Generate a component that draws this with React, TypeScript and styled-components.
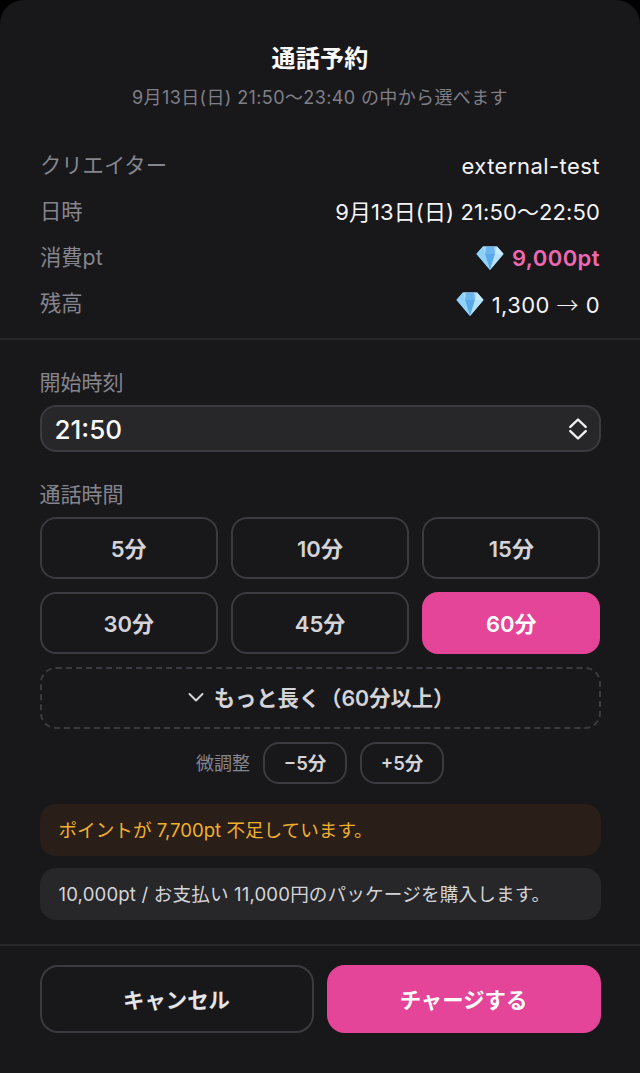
import React from "react";
import styled, { createGlobalStyle } from "styled-components";

const durations = [5, 10, 15, 30, 45, 60];

const Diamond: React.FC = () => (
	<GemSvg viewBox="0 0 28 26">
		<path d="M7 1.5h14L27.5 9 14 25 .5 9z" fill="#7cc4f4" />
		<path d="M7 1.5h14L27.5 9H.5z" fill="#a5dcfb" />
		<path d="M9 9h10l-5 16z" fill="#5aa9ea" />
		<path d="M10 2h8l1 7H9z" fill="#6db5ef" />
		<path d="M.5 9H9l5 16z" fill="#93d2f8" />
		<path d="M19 9h8.5L14 25z" fill="#b5e3fb" />
		<path d="M21 1.5 27.5 9H19z" fill="#c9ecfd" />
		<path d="M7 1.5.5 9H9z" fill="#8fd0f7" />
	</GemSvg>
);

const App: React.FC = () => (
	<>
		<GlobalStyle />
		<Sheet>
			<Header>
				<Title>通話予約</Title>
				<Subtitle>9月13日(日) 21:50〜23:40 の中から選べます</Subtitle>
			</Header>
			<Summary>
				<Row>
					<RowLabel>クリエイター</RowLabel>
					<RowValue>external-test</RowValue>
				</Row>
				<Row>
					<RowLabel>日時</RowLabel>
					<RowValue $tight>9月13日(日) 21:50〜22:50</RowValue>
				</Row>
				<Row>
					<RowLabel>消費pt</RowLabel>
					<RowValue $accent>
						<Diamond />
						9,000pt
					</RowValue>
				</Row>
				<Row>
					<RowLabel>残高</RowLabel>
					<RowValue>
						<Diamond />
						<span>
							1,300 <Arrow>→</Arrow> 0
						</span>
					</RowValue>
				</Row>
			</Summary>
			<Form>
				<FieldLabel>開始時刻</FieldLabel>
				<Select>
					<SelectValue>21:50</SelectValue>
					<svg width="18" height="24" viewBox="0 0 18 24" fill="none" stroke="#f0f0f2" strokeWidth="2.4" strokeLinecap="round" strokeLinejoin="round">
						<path d="M1.3 9.9 9 2.5l7.7 7.4" />
						<path d="M1.3 14.1 9 21.5l7.7-7.4" />
					</svg>
				</Select>
				<DurationLabel>通話時間</DurationLabel>
				<DurationGrid>
					{durations.map((d) => (
						<DurationButton key={d} $active={d === 60}>
							{d}分
						</DurationButton>
					))}
				</DurationGrid>
				<MoreButton>
					<svg width="20" height="20" viewBox="0 0 20 20" fill="none" stroke="#d4d4d8" strokeWidth="2" strokeLinecap="round" strokeLinejoin="round">
						<path d="m3.5 7 6.5 6.5L16.5 7" />
					</svg>
					もっと長く（60分以上）
				</MoreButton>
				<Adjust>
					<AdjustLabel>微調整</AdjustLabel>
					<AdjustButton>−5分</AdjustButton>
					<AdjustButton>+5分</AdjustButton>
				</Adjust>
				<Notice $warn>ポイントが 7,700pt 不足しています。</Notice>
				<Notice>10,000pt / お支払い 11,000円のパッケージを購入します。</Notice>
			</Form>
			<Footer>
				<CancelButton>キャンセル</CancelButton>
				<ChargeButton>チャージする</ChargeButton>
			</Footer>
		</Sheet>
	</>
);

export default App;

const GlobalStyle = createGlobalStyle`
	html, body {
		margin: 0;
		background: #000;
	}
	* {
		box-sizing: border-box;
	}
	body {
		font-family: "Inter", "Noto Sans CJK JP", sans-serif;
	}
`;

const Sheet = styled.div`
	width: 640px;
	height: 1073px;
	background: #18181b;
	border-radius: 24px 24px 0 0;
	overflow: hidden;
`;

const Header = styled.div`
	display: flex;
	flex-direction: column;
	align-items: center;
	padding-top: 43px;
`;

const Title = styled.div`
	font-size: 24px;
	line-height: 32px;
	font-weight: 700;
	letter-spacing: 0.3px;
	color: #fafafa;
`;

const Subtitle = styled.div`
	margin-top: 11px;
	font-size: 18px;
	line-height: 24px;
	letter-spacing: 0.38px;
	color: #7f7f87;
`;

const Summary = styled.div`
	display: flex;
	flex-direction: column;
	gap: 18px;
	margin-top: 42px;
	padding: 0 40px 20px;
	border-bottom: 2px solid #27272a;
`;

const Row = styled.div`
	display: flex;
	justify-content: space-between;
	align-items: center;
	height: 28px;
	line-height: 28px;
	font-size: 21.3px;
`;

const RowLabel = styled.span`
	padding-bottom: 2px;
	color: #85858d;
`;

const RowValue = styled.span<{ $accent?: boolean; $tight?: boolean }>`
	display: flex;
	align-items: center;
	gap: 8px;
	font-size: 22px;
	letter-spacing: ${(p) => (p.$tight ? "0.1px" : "0.45px")};
	color: ${(p) => (p.$accent ? "#f069b0" : "#f4f4f5")};
	font-weight: ${(p) => (p.$accent ? 600 : 400)};
`;

const Arrow = styled.span`
	font-family: "Noto Sans CJK JP", sans-serif;
	font-weight: 300;
`;

const GemSvg = styled.svg`
	width: 28px;
	height: 26px;
`;

const Form = styled.div`
	display: flex;
	flex-direction: column;
	padding: 29px 39.5px 24px;
	border-bottom: 2px solid #27272a;
`;

const FieldLabel = styled.div`
	font-size: 21px;
	line-height: 28px;
	color: #85858d;
`;

const DurationLabel = styled(FieldLabel)`
	margin-top: 29px;
`;

const Select = styled.div`
	display: flex;
	justify-content: space-between;
	align-items: center;
	height: 47px;
	margin-top: 8px;
	padding: 0 12px 0 13px;
	background: #27272a;
	border: 2px solid #3a3a40;
	border-radius: 16px;
	font-size: 26px;
	line-height: 30px;
	font-weight: 500;
	color: #fafafa;
`;

const SelectValue = styled.span`
	padding-top: 3px;
`;

const DurationGrid = styled.div`
	display: grid;
	grid-template-columns: repeat(3, 1fr);
	gap: 13px;
	margin-top: 8px;
`;

const DurationButton = styled.button<{ $active?: boolean }>`
	height: 62px;
	padding: 0 0 3px;
	background: ${(p) => (p.$active ? "#e44598" : "transparent")};
	border: 2px solid ${(p) => (p.$active ? "#e44598" : "#3a3a40")};
	border-radius: 16px;
	font-family: inherit;
	font-size: 22px;
	font-weight: 600;
	color: ${(p) => (p.$active ? "#fff" : "#d4d4d8")};
`;

const MoreButton = styled.button`
	display: flex;
	justify-content: center;
	align-items: center;
	gap: 8px;
	height: 62px;
	margin-top: 13px;
	padding: 0 0 3px;
	background: transparent;
	border: 2px dashed #3a3a40;
	border-radius: 16px;
	font-family: inherit;
	font-size: 21.3px;
	font-weight: 600;
	color: #d4d4d8;
`;

const Adjust = styled.div`
	display: flex;
	justify-content: center;
	align-items: center;
	gap: 13px;
	margin-top: 13px;
`;

const AdjustLabel = styled.span`
	padding-bottom: 2px;
	font-size: 18px;
	color: #85858d;
`;

const AdjustButton = styled.button`
	width: 84px;
	height: 42px;
	padding: 0 0 2px;
	background: transparent;
	border: 2px solid #3a3a40;
	border-radius: 16px;
	font-family: inherit;
	font-size: 18.5px;
	font-weight: 600;
	color: #d4d4d8;
`;

const Notice = styled.div<{ $warn?: boolean }>`
	display: flex;
	align-items: center;
	height: 52px;
	margin-top: ${(p) => (p.$warn ? "20px" : "12px")};
	padding: 0 19px 3px;
	background: ${(p) => (p.$warn ? "#2a1e18" : "#27272a")};
	border-radius: 16px;
	font-size: 18.6px;
	letter-spacing: ${(p) => (p.$warn ? "0" : "0.15px")};
	color: ${(p) => (p.$warn ? "#efb02e" : "#d4d4d8")};
`;

const Footer = styled.div`
	display: grid;
	grid-template-columns: 1fr 1fr;
	gap: 13px;
	padding: 19px 39.5px 0;
`;

const CancelButton = styled.button`
	height: 68px;
	padding: 0 0 2px;
	background: transparent;
	border: 2px solid #3a3a40;
	border-radius: 18px;
	font-family: inherit;
	font-size: 21.4px;
	font-weight: 600;
	color: #e4e4e7;
`;

const ChargeButton = styled(CancelButton)`
	background: #e44598;
	border-color: #e44598;
	color: #fff;
`;
